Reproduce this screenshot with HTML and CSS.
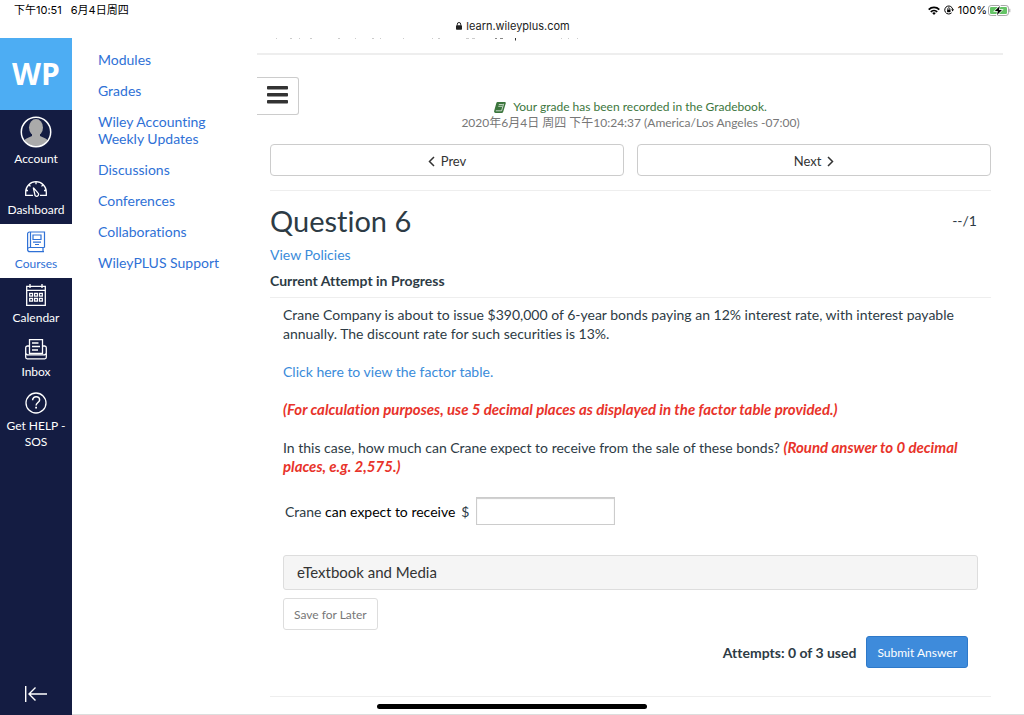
FILE: index.html
```html
<!DOCTYPE html>
<html lang="en">
<head>
<meta charset="utf-8">
<meta name="viewport" content="width=device-width, initial-scale=1">
<title>WileyPLUS - Question 6</title>
<link rel="stylesheet" href="styles.css">
</head>
<body>
<header class="browser-bar">
  <div class="status">
    <div class="status-left"><span>下午10:51</span><span>6月4日周四</span></div>
    <div class="status-right">
      <svg width="12" height="9" viewBox="0 0 12 9"><g fill="none" stroke="#000" stroke-width="1.8"><path d="M.7 3.6a7.6 7.6 0 0 1 10.6 0"/><path d="M2.8 5.9a4.6 4.6 0 0 1 6.4 0"/></g><path d="M6 9 4.2 7.1a2.6 2.6 0 0 1 3.6 0z"/></svg>
      <svg width="10" height="10" viewBox="0 0 10 10"><path d="M7.6 7.8A4 4 0 1 1 8.7 4.4" fill="none" stroke="#000"/><path d="M7.2 4.2h2.8L8.6 6.4z"/><path d="M3.1 4.6h3.4v2.6H3.1z"/><path d="M3.8 4.8V3.7a1 1 0 0 1 2 0v1.1" fill="none" stroke="#000" stroke-width=".8"/></svg>
      <span>100%</span>
      <svg width="23" height="11" viewBox="0 0 23 11"><rect x=".5" y=".5" width="20" height="10" rx="2.6" fill="#fff" stroke="#a8a8a8"/><rect x="2" y="2" width="17" height="7" rx="1.2" fill="#65c466"/><path d="M11.8 1 6.8 6h3l-.8 4 5-5h-3z" stroke="#fff" stroke-width="1.4" paint-order="stroke"/><path d="M21.8 3.8v3.4" stroke="#a8a8a8"/></svg>
    </div>
  </div>
  <div class="address">
    <svg width="6" height="8" viewBox="0 0 6 8"><rect y="3.2" width="6" height="4.5" rx=".7" fill="#222"/><path d="M1.3 3.6V2.2a1.7 1.7 0 0 1 3.4 0v1.4" fill="none" stroke="#222"/></svg>
    <span>learn.wileyplus.com</span>
  </div>
</header>
<div class="shell">
  <nav class="rail" aria-label="Global">
    <a class="logo" href="#">WP</a>
    <a class="rail-item account" href="#">
      <svg width="32" height="32" viewBox="0 0 32 32"><defs><clipPath id="av"><circle cx="16" cy="16" r="14"/></clipPath></defs><g clip-path="url(#av)"><ellipse cx="16" cy="11.5" rx="7" ry="8.5" fill="#aaa"/><path d="M12 17h8v3l5 2.2c3 1.4 4 3 4 9.8H3c0-6.8 1-8.400 4-9.800L12 20z" fill="#aaa"/></g><circle cx="16" cy="16" r="14.700" fill="none" stroke="#fff" stroke-width="1.500"/></svg>
      <span>Account</span>
    </a>
    <a class="rail-item" href="#">
      <svg width="24" height="24" viewBox="0 0 24 24" fill="none" stroke="#fff" stroke-width="1.300"><path d="M9 20.400H1.700V17a10.300 10.300 0 0 1 20.600 0v3.400H16"/><path d="M12 6.800v2.500M4.800 9.700l1.700 1.700M19.200 9.700l-1.700 1.700M2 15.500h2M20 15.500h2"/><path d="M9.300 12.600l4.800 5.500a1.900 1.900 0 1 1-3.300 1.300z"/></svg>
      <span>Dashboard</span>
    </a>
    <a class="rail-item active" href="#">
      <svg width="24" height="24" viewBox="0 0 24 24" fill="none" stroke="#2f71d6" stroke-width="1.200"><path d="M20.500 18.500V3H5.500A1.900 1.900 0 0 0 3.600 5v15.500A2 2 0 0 0 5.600 22.700H20M20.500 18.500H5.600a2 2 0 0 0 0 4M6.500 3v15.500M19 18.500v4"/><path d="M9 6h8v4.500H9zM9 13.200h8M11 15.500h4"/></svg>
      <span>Courses</span>
    </a>
    <a class="rail-item" href="#">
      <svg width="24" height="24" viewBox="0 0 24 24" fill="none" stroke="#fff" stroke-width="1.300"><path d="M2.700 3.300h18.600v19H2.700zM2.700 7.300h18.600M6 1v4M18 1v4"/><path d="M5.700 10.400h2.800v2.800H5.700zM10.600 10.400h2.800v2.800h-2.800zM15.500 10.400h2.800v2.800h-2.800zM5.700 15.400h2.800v2.800H5.700zM10.600 15.400h2.800v2.800h-2.800zM15.500 15.400h2.800v2.800h-2.800z"/></svg>
      <span>Calendar</span>
    </a>
    <a class="rail-item" href="#">
      <svg width="24" height="24" viewBox="0 0 24 24" fill="none" stroke="#fff" stroke-width="1.300"><path d="M5.500 16.500V2.700h13v13.800zM8 6h6.500M8 9.500h8M8 13h6"/><path d="M5.500 9H3.400a1.800 1.800 0 0 0-1.700 1.800v9.500a1.500 1.500 0 0 0 1.500 1.500h17.600a1.500 1.500 0 0 0 1.500-1.500v-9.500A1.800 1.800 0 0 0 20.600 9h-2.100M1.700 16.500l1.600 1.300h17.400l1.600-1.300"/></svg>
      <span>Inbox</span>
    </a>
    <a class="rail-item" href="#">
      <svg width="24" height="24" viewBox="0 0 24 24" fill="none" stroke="#fff" stroke-width="1.300"><circle cx="12" cy="12" r="10"/><path d="M8.600 9.200c0-4.800 7-4.300 7-.300 0 2.600-3.500 2.700-3.500 5.600" stroke-width="1.500"/><path d="M11.200 15.800h1.800v1.800h-1.800z" fill="#fff" stroke="none"/></svg>
      <span>Get HELP - SOS</span>
    </a>
    <button class="collapse" type="button" aria-label="Minimize navigation"><svg width="24" height="18" viewBox="0 0 24 18" fill="none" stroke="#fff" stroke-width="1.400"><path d="M1.700 1v16M11.500 2.500 5 9l6.500 6.500M5 9h18"/></svg></button>
  </nav>
  <nav class="course-nav" aria-label="Course">
    <a href="#">Modules</a>
    <a href="#">Grades</a>
    <a href="#">Wiley Accounting Weekly Updates</a>
    <a href="#">Discussions</a>
    <a href="#">Conferences</a>
    <a href="#">Collaborations</a>
    <a href="#">WileyPLUS Support</a>
  </nav>
  <main class="main">
    <svg class="scrolled-line" width="340" height="3" viewBox="0 0 340 3" aria-hidden="true"><path d="M19 .5h1M33 .5h2M42 .5h1M53 .5h2M81 .5h2M98 .5h1M115 .5h2M123 .5h1M146 .5h1M175 .5h1M181 .5h2M209 .5h3M215 .5h3M304 .5h1M311 .5h1M320 .5h1" stroke="#ccc"/><path d="M238 .5h2M243 .5h3" stroke="#888"/><path d="M258.500 0v2.500" stroke="#333"/></svg>
    <div class="top-rule"></div>
    <button class="menu" type="button" aria-label="Menu"><svg width="21" height="18" viewBox="0 0 21 18" fill="#333"><rect width="21" height="3.500" rx=".8"/><rect y="7" width="21" height="3.500" rx=".8"/><rect y="14" width="21" height="3.500" rx=".8"/></svg></button>
    <div class="content">
      <div class="notice">
        <p class="recorded"><svg width="12" height="11" viewBox="0 0 12 11"><path d="M3.500 0h7c1 0 1.500.600 1.200 1.500L9.300 9.500c-.300 1-1 1.500-2 1.500H1.600C.400 11-.200 10 .200 8.800L2.300 1.200C2.500.400 2.900 0 3.500 0z" fill="#3c763d"/><path d="M4.800 2.500h4M4.300 4.300h4M1.800 8.800h5.800l2-7" fill="none" stroke="#fff" stroke-width=".700"/></svg>Your grade has been recorded in the Gradebook.</p>
        <p class="stamp">2020年6月4日 周四 下午10:24:37 (America/Los Angeles -07:00)</p>
      </div>
      <div class="pager">
        <button type="button"><svg width="7" height="11" viewBox="0 0 7 11"><path d="M6 1 1.500 5.500 6 10" fill="none" stroke="#333" stroke-width="1.500"/></svg>Prev</button>
        <button type="button">Next<svg width="7" height="11" viewBox="0 0 7 11"><path d="M1 1l4.500 4.500L1 10" fill="none" stroke="#333" stroke-width="1.500"/></svg></button>
      </div>
      <div class="title-row"><h1>Question 6</h1><span class="score">--/1</span></div>
      <a class="policies" href="#">View Policies</a>
      <h2>Current Attempt in Progress</h2>
      <section class="question">
        <p>Crane Company is about to issue $390,000 of 6-year bonds paying an 12% interest rate, with interest payable annually. The discount rate for such securities is 13%.</p>
        <p><a href="#">Click here to view the factor table.</a></p>
        <p><em>(For calculation purposes, use 5 decimal places as displayed in the factor table provided.)</em></p>
        <p>In this case, how much can Crane expect to receive from the sale of these bonds? <em>(Round answer to 0 decimal places, e.g. 2,575.)</em></p>
        <div class="answer"><label for="amount">Crane <span>can expect to receive</span></label><span class="unit">$</span><input id="amount" type="text"></div>
        <button class="media" type="button">eTextbook and Media</button>
        <button class="save" type="button">Save for Later</button>
        <div class="submit-row"><span>Attempts: 0 of 3 used</span><button type="button">Submit Answer</button></div>
      </section>
    </div>
  </main>
</div>
<div class="home-indicator"></div>
</body>
</html>
```
FILE: styles.css
```css
* { box-sizing: border-box; }
body {
  margin: 0;
  min-height: 100vh;
  display: flex;
  flex-direction: column;
  background: #fff;
  color: #2d3b45;
  font-family: Lato, "Noto Sans CJK SC", sans-serif;
  font-size: 14px;
  line-height: 19px;
  font-variant-ligatures: none;
}
p, h1, h2 { margin: 0; }
a { text-decoration: none; color: #3a8bda; }
button { font: inherit; font-variant-ligatures: none; cursor: pointer; }
svg { flex: none; display: block; }

.browser-bar {
  height: 38px;
  color: #000;
  font-family: Inter, "Noto Sans CJK SC", sans-serif;
  font-size: 11px;
  line-height: 16px;
}
.status { display: flex; justify-content: space-between; padding: 2px 13px 0 14px; }
.status-left { display: flex; gap: 9px; }
.status-right { display: flex; align-items: center; gap: 4px; }
.status-right span { margin-right: -3px; }
.address { display: flex; justify-content: center; align-items: center; gap: 4px; padding-left: 2px; color: #222; }

.shell { flex: 1; display: flex; border-bottom: 1px solid #ddd; }

.rail {
  width: 72px;
  flex: none;
  margin-bottom: -1px;
  display: flex;
  flex-direction: column;
  background: #141c42;
  font-size: 12px;
  line-height: 16px;
}
.logo {
  height: 72px;
  display: grid;
  place-items: center;
  background: #4dadf3;
  color: #fff;
  font: 700 30px/40px "Open Sans", sans-serif;
}
.rail-item {
  min-height: 54px;
  padding: 5px 4px 0;
  display: flex;
  flex-direction: column;
  align-items: center;
  gap: 3px;
  text-align: center;
  color: #fff;
}
.rail-item.account { min-height: 60px; padding-top: 6px; }
.rail-item.active { background: #fff; color: #2f71d6; }
.collapse {
  margin-top: auto;
  padding: 12px 0;
  display: grid;
  place-items: center;
  border: 0;
  background: none;
}

.course-nav {
  width: 185px;
  flex: none;
  padding: 13px 44px 0 26px;
  display: flex;
  flex-direction: column;
  gap: 14px;
  line-height: 17px;
}
.course-nav a { color: #2f71d6; }
.course-nav a:last-child { white-space: nowrap; }

.main { flex: 1; min-width: 0; margin-right: 21px; }
.scrolled-line { margin-bottom: 12px; }
.top-rule { height: 2px; background: #eee; }
.menu {
  display: grid;
  place-items: center;
  width: 42px;
  height: 38px;
  margin-top: 22px;
  padding: 0 0 2px;
  background: #fff;
  border: 1px solid #ccc;
  border-left: 0;
  border-radius: 0 3px 3px 0;
}
.content { margin: -16px 12px 0 13px; border-bottom: 1px solid #eee; padding-bottom: 28px; }
.notice { text-align: center; font-size: 12px; line-height: 16px; padding: 0 0 13px; }
.recorded { display: flex; justify-content: center; align-items: center; gap: 7px; color: #3c763d; }
.stamp { color: #777; }
.pager { display: grid; grid-template-columns: 1fr 1fr; gap: 13px; padding-bottom: 14px; border-bottom: 1px solid #eee; }
.pager button {
  height: 32px;
  display: flex;
  justify-content: center;
  align-items: center;
  gap: 6px;
  padding: 2px 6px 0;
  background: #fff;
  color: #333;
  border: 1px solid #ccc;
  border-radius: 4px;
  font-size: 13px;
}
.title-row { display: flex; justify-content: space-between; align-items: center; padding: 10px 14px 5px 0; }
h1 { font-size: 29px; line-height: 39px; font-weight: 400; }
.policies { display: block; }
h2 { font-size: 14px; line-height: 19px; padding: 7px 0; border-bottom: 1px solid #eee; }
.question { padding: 7px 13px 0; }
.question p { margin-bottom: 19px; }
em { color: #e8332a; font-size: 15px; line-height: 16px; font-weight: 700; }
.answer { display: flex; align-items: center; padding: 2px 2px 0; }
.answer label span { color: #000; }
.unit { margin: 0 7px 0 6px; }
.answer input {
  width: 139px;
  height: 28px;
  border: 1px solid #ccc;
  box-shadow: inset 0 1px 1px #ccc;
  font: inherit;
}
.media {
  display: block;
  width: 100%;
  height: 35px;
  margin: 30px 0 8px;
  padding: 0 13px;
  text-align: left;
  background: #f5f5f5;
  border: 1px solid #ddd;
  border-radius: 3px;
  color: #333;
  font-size: 15px;
}
.save {
  height: 32px;
  padding: 0 10px;
  background: #fff;
  border: 1px solid #ddd;
  border-radius: 3px;
  color: #777;
  font-size: 12px;
  display: block;
}
.submit-row { display: flex; justify-content: flex-end; align-items: center; gap: 10px; padding: 6px 10px 0 0; font-weight: 700; }
.submit-row button {
  height: 32px;
  padding: 0 10px;
  background: #3e8bdb;
  border: 1px solid #2e79c9;
  border-radius: 3px;
  color: #fff;
  font-size: 12px;
  font-weight: 400;
}
.home-indicator {
  position: fixed;
  bottom: 6px;
  left: 50%;
  width: 270px;
  height: 5px;
  margin-left: -135px;
  border-radius: 3px;
  background: #000;
}
```
